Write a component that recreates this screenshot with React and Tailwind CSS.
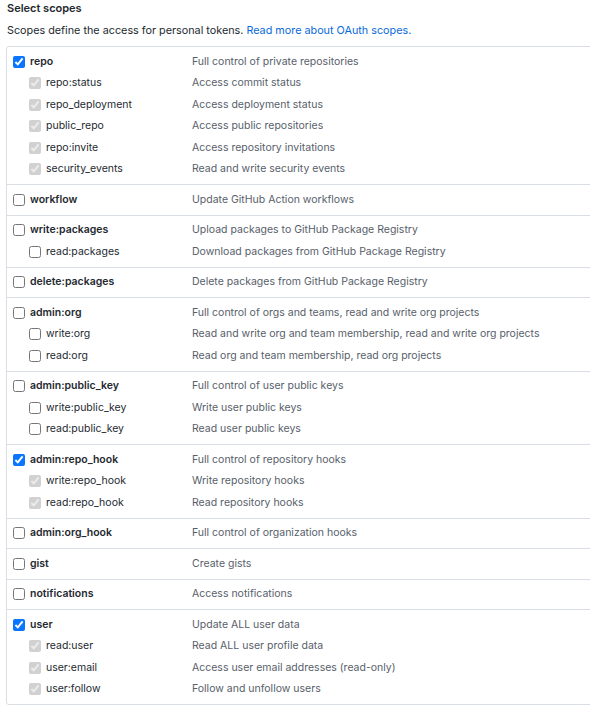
import React from 'react';

const groups = [
  {
    name: 'repo', desc: 'Full control of private repositories', checked: true,
    children: [
      ['repo:status', 'Access commit status'],
      ['repo_deployment', 'Access deployment status'],
      ['public_repo', 'Access public repositories'],
      ['repo:invite', 'Access repository invitations'],
      ['security_events', 'Read and write security events'],
    ],
  },
  { name: 'workflow', desc: 'Update GitHub Action workflows' },
  {
    name: 'write:packages', desc: 'Upload packages to GitHub Package Registry',
    children: [['read:packages', 'Download packages from GitHub Package Registry']],
  },
  { name: 'delete:packages', desc: 'Delete packages from GitHub Package Registry' },
  {
    name: 'admin:org', desc: 'Full control of orgs and teams, read and write org projects',
    children: [
      ['write:org', 'Read and write org and team membership, read and write org projects'],
      ['read:org', 'Read org and team membership, read org projects'],
    ],
  },
  {
    name: 'admin:public_key', desc: 'Full control of user public keys',
    children: [
      ['write:public_key', 'Write user public keys'],
      ['read:public_key', 'Read user public keys'],
    ],
  },
  {
    name: 'admin:repo_hook', desc: 'Full control of repository hooks', checked: true,
    children: [
      ['write:repo_hook', 'Write repository hooks'],
      ['read:repo_hook', 'Read repository hooks'],
    ],
  },
  { name: 'admin:org_hook', desc: 'Full control of organization hooks' },
  { name: 'gist', desc: 'Create gists' },
  { name: 'notifications', desc: 'Access notifications' },
  {
    name: 'user', desc: 'Update ALL user data', checked: true,
    children: [
      ['read:user', 'Read ALL user profile data'],
      ['user:email', 'Access user email addresses (read-only)'],
      ['user:follow', 'Follow and unfollow users'],
    ],
  },
];

function Row({ label, desc, checked, disabled, sub }) {
  return (
    <div className="flex items-center h-[21.5px]">
      <div className={`flex items-center w-[185px] shrink-0 ${sub ? 'pl-[22px]' : 'pl-[6px]'}`}>
        <input
          type="checkbox"
          defaultChecked={checked}
          disabled={disabled}
          className="w-[12px] h-[12px] shrink-0 accent-[#0a75ff]"
        />
        <span className={`ml-[5px] text-[#24292f] ${sub ? '' : 'font-semibold'}`}>
          {label}
        </span>
      </div>
      <span className="text-[#57606a]">{desc}</span>
    </div>
  );
}

export default function App() {
  return (
    <div
      className="w-[590px] h-[707px] overflow-hidden bg-white text-[10.5px] leading-none"
      style={{ fontFamily: 'Inter, "Liberation Sans", sans-serif' }}
    >
      <h2 className="pl-[7px] pt-[2px] text-[11px] font-semibold text-[#24292f] leading-[13px]">Select scopes</h2>
      <p className="pl-[7px] mt-[9px] text-[10.8px] text-[#24292f] leading-[13px]">
        Scopes define the access for personal tokens.{' '}
        <a className="text-[#0969da]">Read more about OAuth scopes.</a>
      </p>
      <div className="ml-[6px] mt-[9px] w-[600px] border border-[#d8dee4] rounded-[3px]">
        {groups.map((g, i) => (
          <div
            key={g.name}
            className={`pt-[4px] pb-[4px] ${i < groups.length - 1 ? 'border-b border-[#d8dee4]' : ''}`}
          >
            <Row label={g.name} desc={g.desc} checked={g.checked} />
            {(g.children || []).map(([l, d]) => (
              <Row key={l} label={l} desc={d} sub checked={g.checked} disabled={g.checked} />
            ))}
          </div>
        ))}
      </div>
    </div>
  );
}
